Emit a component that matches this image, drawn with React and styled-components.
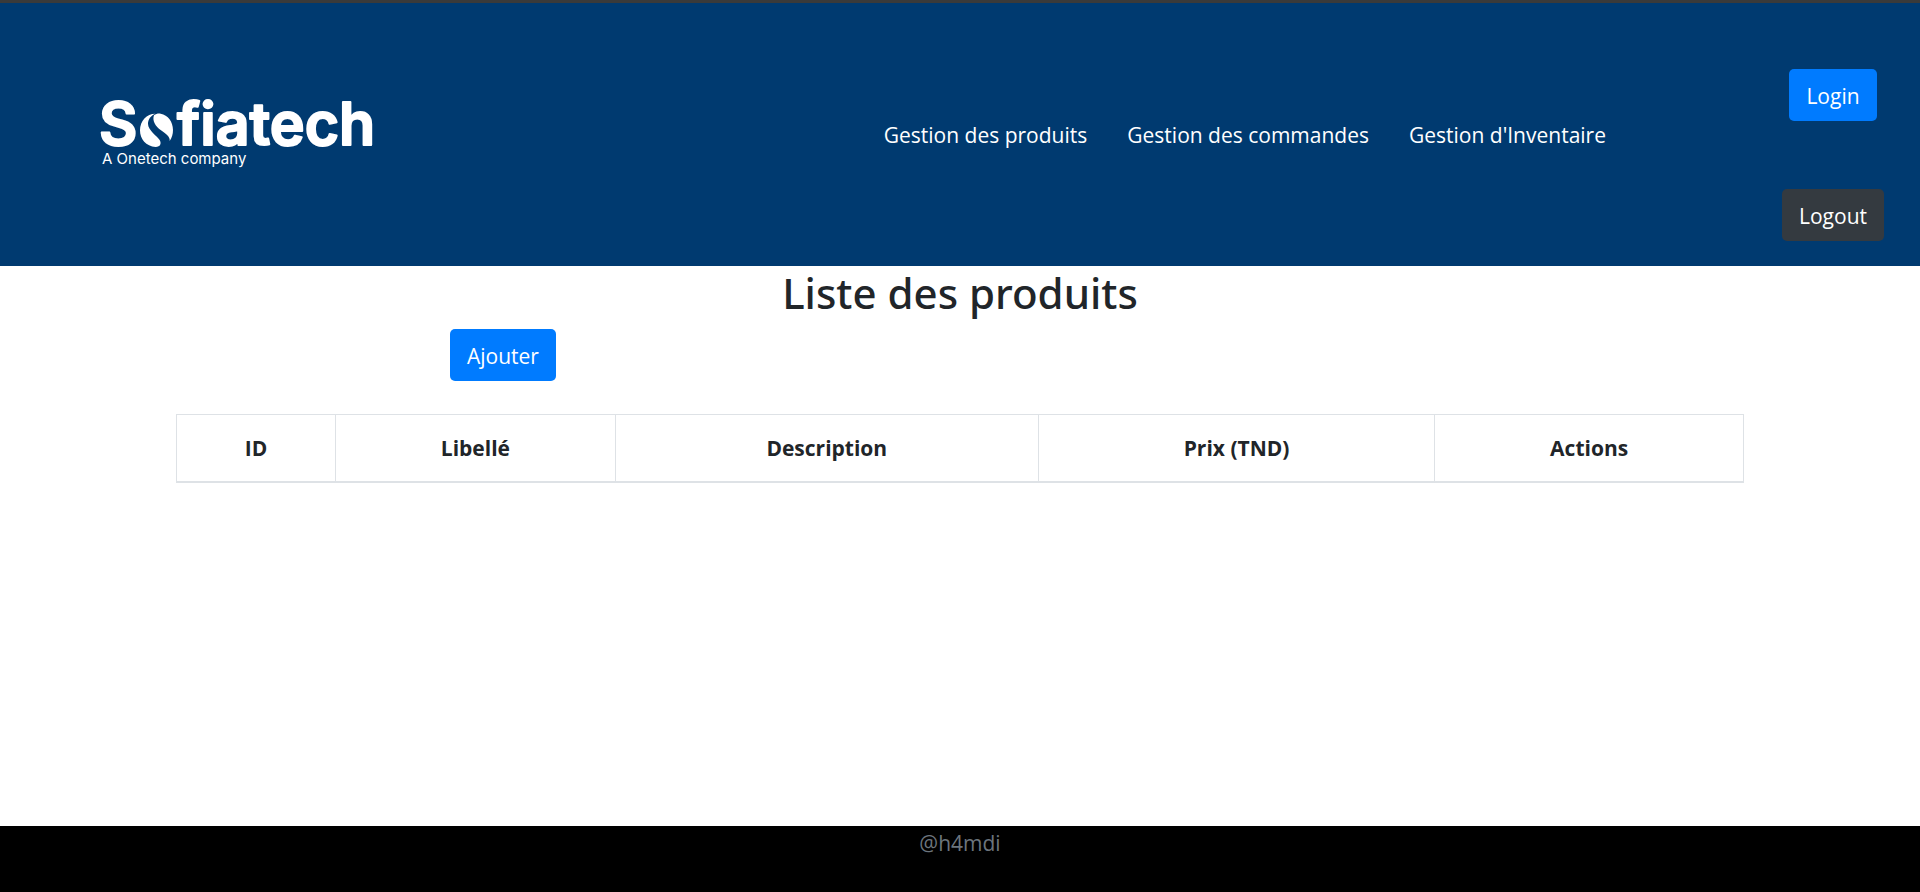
import React from "react";
import styled, { createGlobalStyle } from "styled-components";

const GlobalStyle = createGlobalStyle`
  *, *::before, *::after { box-sizing: border-box; }
  body {
    margin: 0;
    background: #fff;
    color: #212529;
    font-family: "Open Sans", "Noto Sans", sans-serif;
    font-size: 21px;
    line-height: 33px;
  }
`;

const Page = styled.div`
  min-height: 100vh;
  display: flex;
  flex-direction: column;
`;

const Header = styled.header`
  display: flex;
  align-items: center;
  background: #003a70;
  border-top: 3px solid #3a3a3a;
  padding: 0 36px 0 100px;
`;

const LogoLink = styled.a`
  display: block;
  margin-right: auto;

  svg { display: block; overflow: visible; }
`;

const Nav = styled.nav`
  display: flex;
  gap: 40px;
  margin-right: 176px;
  padding-top: 2px;
`;

const NavLink = styled.a`
  color: #fff;
  text-decoration: none;
  white-space: nowrap;
`;

const Account = styled.div`
  display: flex;
  flex-direction: column;
  align-items: center;
  gap: 68px;
  padding: 66px 0 25px;
`;

const Button = styled.button`
  height: 52px;
  padding: 2px 17px 0;
  border: 0;
  border-radius: 5px;
  background: ${({ $dark }) => ($dark ? "#343a40" : "#007bff")};
  color: #fff;
  font: inherit;
  cursor: pointer;
`;

const Main = styled.main`
  flex: 1;
  width: 100%;
  max-width: 1568px;
  margin: 0 auto;
`;

const Title = styled.h2`
  margin: 0 0 10px;
  font-family: "Noto Sans", "Open Sans", sans-serif;
  font-size: 42px;
  font-weight: 500;
  line-height: 53px;
  text-align: center;
`;

const Toolbar = styled.div`
  display: flex;
  padding-left: 274px;
  margin-bottom: 33px;
`;

const Table = styled.table`
  width: 100%;
  table-layout: fixed;
  border-collapse: collapse;
`;

const HeadCell = styled.th`
  width: ${({ $width }) => $width};
  padding: 17px 17px 16px;
  border: 1px solid #dee2e6;
  border-bottom-width: 2px;
  font-weight: 700;
  text-align: center;
`;

const Footer = styled.footer`
  height: 66px;
  background: #000;
  color: #6c757d;
  line-height: 35px;
  text-align: center;
`;

const columns = [
  { label: "ID", width: "10.15%" },
  { label: "Libellé", width: "17.85%" },
  { label: "Description", width: "27%" },
  { label: "Prix (TND)", width: "25.3%" },
  { label: "Actions", width: "19.7%" },
];

const links = ["Gestion des produits", "Gestion des commandes", "Gestion d'Inventaire"];

function Logo() {
  return (
    <svg width="280" height="89" viewBox="0 0 280 89" fill="#fff" role="img" aria-label="Sofiatech, A Onetech company">
      <g fontFamily="Inter, sans-serif" fontWeight="600" fontSize="59" stroke="#fff" strokeWidth="2" strokeLinejoin="round">
        <text x="-1" y="55">S</text>
        <text x="77" y="55">fiatech</text>
      </g>
      <g transform="translate(-10 0) scale(0.3333)">
        <path d="M196 71C170 71 150 92 150 121C150 148 168 169 197 171C211 171 215 160 209 150C202 138 174 121 174 101C174 88 182 77 196 71Z" />
        <path d="M192 76C198 71 205 70 212 71C234 75 249 95 249 120C249 132 246 143 239 153C241 140 227 131 213 121C196 109 186 92 192 76Z" />
      </g>
      <text x="2" y="74" fontFamily="Inter, sans-serif" fontSize="15">A Onetech company</text>
    </svg>
  );
}

export default function App() {
  return (
    <>
      <GlobalStyle />
      <Page>
        <Header>
          <LogoLink href="#accueil"><Logo /></LogoLink>
          <Nav>
            {links.map((label) => (
              <NavLink key={label} href="#">{label}</NavLink>
            ))}
          </Nav>
          <Account>
            <Button type="button">Login</Button>
            <Button type="button" $dark>Logout</Button>
          </Account>
        </Header>
        <Main>
          <Title>Liste des produits</Title>
          <Toolbar>
            <Button type="button">Ajouter</Button>
          </Toolbar>
          <Table>
            <thead>
              <tr>
                {columns.map(({ label, width }) => (
                  <HeadCell key={label} scope="col" $width={width}>{label}</HeadCell>
                ))}
              </tr>
            </thead>
            <tbody />
          </Table>
        </Main>
        <Footer>@h4mdi</Footer>
      </Page>
    </>
  );
}
